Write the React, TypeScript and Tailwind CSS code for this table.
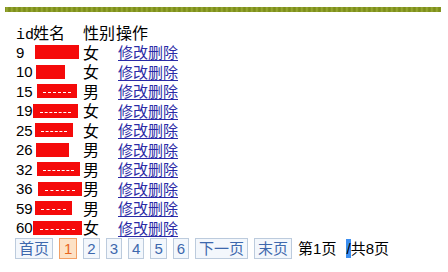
import React from "react";

type Row = {
  id: string;
  sex: string;
  block: string; // red mask over the name
  dash?: boolean;
};

const rows: Row[] = [
  { id: "9", sex: "女", block: "ml-[2px] w-[44px]" },
  { id: "10", sex: "女", block: "ml-[3px] w-[29px]" },
  { id: "15", sex: "男", block: "ml-[4px] w-[40px]", dash: true },
  { id: "19", sex: "女", block: "ml-[0px] w-[45px]", dash: true },
  { id: "25", sex: "女", block: "ml-[2px] w-[38px]", dash: true },
  { id: "26", sex: "男", block: "ml-[3px] w-[33px]" },
  { id: "32", sex: "男", block: "ml-[4px] w-[43px]", dash: true },
  { id: "36", sex: "男", block: "ml-[5px] w-[44px]", dash: true },
  { id: "59", sex: "男", block: "ml-[2px] w-[37px]", dash: true },
  { id: "60", sex: "女", block: "ml-[0px] w-[49px]", dash: true },
];

const cjk = "font-['Noto_Sans_CJK_SC',sans-serif]";
const sans = "font-['Liberation_Sans','Noto_Sans_CJK_SC',sans-serif]";

const PageBox = ({ label, active }: { label: string; active?: boolean }) => (
  <span
    className={
      active
        ? "h-[21px] px-[4px] flex items-center border border-[#f2a066] bg-[#fde2c6] text-[#e8661e]"
        : "h-[21px] px-[3px] flex items-center border border-[#bccbdd] bg-[#f3f7fc] text-[#3d68ad]"
    }
  >
    {label}
  </span>
);

export default function App() {
  return (
    <div className="w-[448px] h-[272px] bg-white overflow-hidden">
      {/* olive header strip */}
      <div className="mt-[7px] ml-[5px] w-[436px] h-[5px] bg-[repeating-linear-gradient(90deg,#7b8c1a_0px,#9cad38_2px,#84951f_3px,#7b8c1a_5px)]" />

      {/* user table */}
      <div className="mt-[11px] ml-[16px] text-black text-[16px] leading-[19px]">
        <div className="grid grid-cols-[17px_50px_33px_auto] h-[19px] items-baseline">
          <span className="font-['Liberation_Mono',monospace] text-[15px]">id</span>
          <span className={cjk}>姓名</span>
          <span className={cjk}>性别</span>
          <span className={cjk}>操作</span>
        </div>
        {rows.map((r) => (
          <div key={r.id} className="grid grid-cols-[17px_50px_33px_auto] h-[19.5px] items-center">
            <span className={`${sans} text-[15px]`}>{r.id}</span>
            <span className="flex">
              <span className={`${r.block} h-[14px] bg-[#f50a0a] flex items-center justify-center`}>
                {r.dash && <span className="w-[70%] mt-[3px] border-t border-dashed border-white" />}
              </span>
            </span>
            <span className={cjk}>{r.sex}</span>
            <span className="pl-[2px]">
              <a href="#" className={`${cjk} text-[15px] text-[#2b2ba6] underline underline-offset-2`}>
                修改删除
              </a>
            </span>
          </div>
        ))}
      </div>

      {/* pager */}
      <div className={`mt-[1px] ml-[15px] flex items-center gap-[6px] text-[15px] leading-none ${sans}`}>
        <PageBox label="首页" />
        <PageBox label="1" active />
        <PageBox label="2" />
        <PageBox label="3" />
        <PageBox label="4" />
        <PageBox label="5" />
        <PageBox label="6" />
        <PageBox label="下一页" />
        <PageBox label="末页" />
        <span className="flex items-center text-black">
          第1页
          <span className="ml-[10px] bg-[#3b8ef0] h-[19px] flex items-center">/</span>
          共8页
        </span>
      </div>
    </div>
  );
}
